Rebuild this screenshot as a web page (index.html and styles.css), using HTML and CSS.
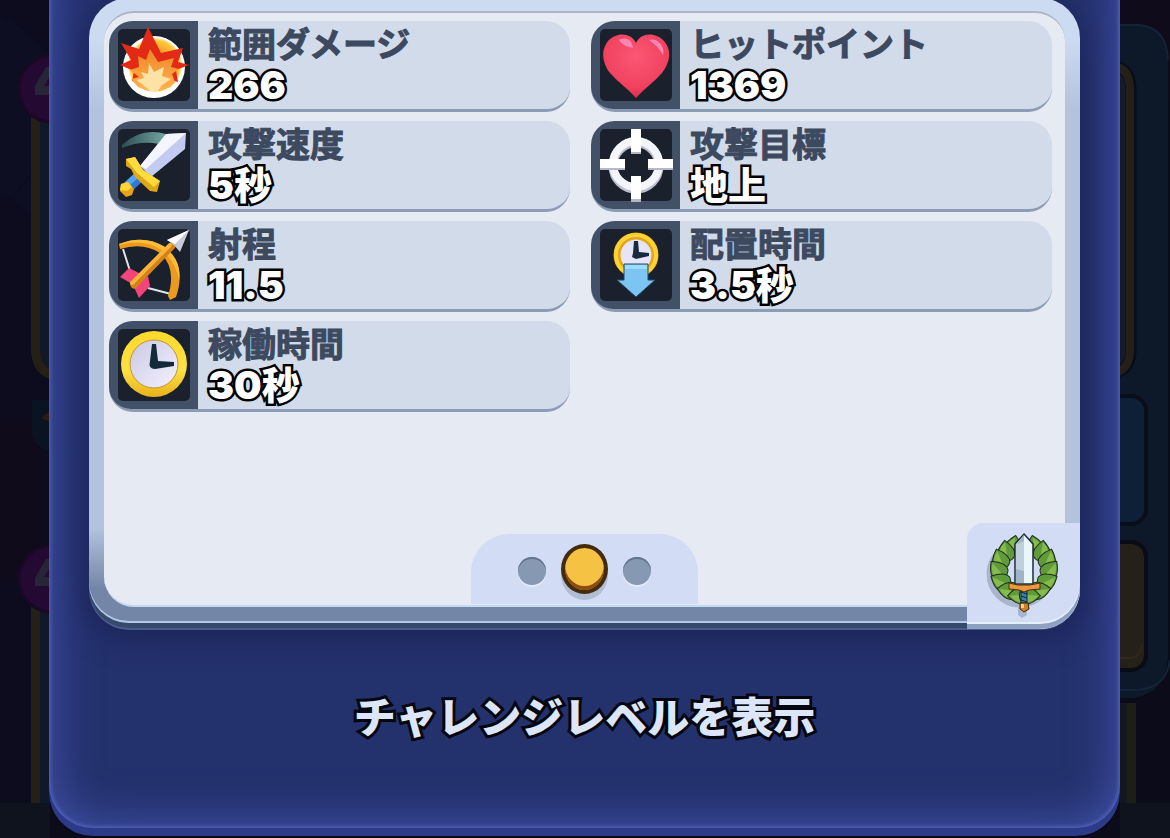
FILE: index.html
```html
<!doctype html>
<html lang="ja">
  <head>
    <meta charset="UTF-8">
    <meta name="viewport" content="width=device-width, initial-scale=1">
    <title>カード情報</title>
    <link rel="stylesheet" href="styles.css">
  </head>
  <body>
    <!-- dimmed screen behind the dialog -->
    <svg class="backdrop backdrop-left" width="50" height="838" viewBox="0 0 50 838" aria-hidden="true">
      <rect width="50" height="838" fill="#0c0c1e"/>
      <path d="M0 16L14 22L50 54V150L30 174L12 196H0zM30 178L50 200V230L12 200z" fill="#0e0e22"/>
      <path d="M0 420H34L40 440V540L20 580H0z" fill="#0f0b1b"/>
      <path d="M36 110H50V376Q36 372 36 358zM36 600H50V803H36z" fill="#111827"/>
      <path d="M35.500 110V350Q36 370 52 375M35.500 590V803" fill="none" stroke="#242015" stroke-width="9"/>
      <path d="M32 400V435Q36 448 50 452V400z" fill="#0a1322"/>
      <path d="M41 418L50 411V422z" fill="#2a1c10"/>
      <circle cx="52" cy="89" r="33" fill="#240a33" stroke="#1b0826" stroke-width="3"/>
      <circle cx="52" cy="579" r="33" fill="#240a33" stroke="#1b0826" stroke-width="3"/>
      <path d="M50 67H46L35 86V95H50V86H44L50 76zM50 559H46L35 578V586H50V577H44L50 567z" fill="#272638"/>
      <rect y="803" width="50" height="35" fill="#0e131d"/>
    </svg>
    <svg class="backdrop backdrop-right" width="50" height="838" viewBox="0 0 50 838" aria-hidden="true">
      <rect width="50" height="838" fill="#0b0b1a"/>
      <rect width="50" height="100" fill="#100b1b"/>
      <path d="M0 24H18Q48 26 48 60V655Q46 693 14 698H0z" fill="#0d1829"/>
      <path d="M0 25H18Q47 27 48 60M50 660Q46 690 14 690H0" fill="none" stroke="#142335" stroke-width="2"/>
      <path d="M-8 66Q11 67 11 90V350Q11 370-8 374" fill="#151b27" stroke="#090d17" stroke-width="11"/>
      <path d="M-8 66Q10 67 10 90V350Q10 370-8 374" fill="none" stroke="#242018" stroke-width="8"/>
      <rect x="-20" y="396" width="46" height="128" rx="15" fill="#0d2037" stroke="#090e19" stroke-width="4"/>
      <rect x="-20" y="542" width="46" height="128" rx="15" fill="#252118" stroke="#090c16" stroke-width="4"/>
      <path d="M-10 658H10Q20 658 22 645" fill="none" stroke="#30261a" stroke-width="2"/>
      <path d="M0 703H16V803H0z" fill="#15171e"/>
      <path d="M7 703H16V803H7z" fill="#1d1e16"/>
      <rect y="803" width="50" height="35" fill="#0e131d"/>
    </svg>

    <main class="dialog">
      <section class="panel">
        <div class="sheet">
          <ul class="stats">
            <li class="stat">
              <div class="tile">
                <svg width="80" height="80" viewBox="0 0 80 80" aria-hidden="true">
                  <defs>
                    <radialGradient id="glow"><stop offset=".5" stop-color="#f39a1c"/><stop offset=".9" stop-color="#ffc63d"/><stop offset="1" stop-color="#ffe9a0"/></radialGradient>
                    <linearGradient id="flame" x2="0" y2="1"><stop stop-color="#ef8527"/><stop offset="1" stop-color="#ffb34f"/></linearGradient>
                  </defs>
                  <rect x="4" y="4" width="72" height="72" rx="5" fill="#1a212d"/>
                  <circle cx="40" cy="42" r="31" fill="#fff"/>
                  <circle cx="41" cy="40" r="27" fill="url(#glow)"/>
                  <path d="M7 18L25 24L34 2L47 28L69 23L64 37L75 40L62 45L64 57L53 54L42 65L31 62L18 56L20 46L6 40L17 35z" fill="#e32a16"/>
                  <path d="M24 31L32 35L36 24L44 37L60 33L57 42L65 44L58 49L61 57L56 62L47 66H34L24 62L17 54L25 52L16 45L25 42z" fill="url(#flame)"/>
                  <path d="M35 38L40 47L50 42L48 51L57 54L48 60L44 66H36L29 60L22 55L30 53L27 47L34 49z" fill="#fce3a5"/>
                </svg>
              </div>
              <div class="stat-text">
                <p class="label">範囲ダメージ</p>
                <p class="value">266</p>
              </div>
            </li>
            <li class="stat">
              <div class="tile">
                <svg width="80" height="80" viewBox="0 0 80 80" aria-hidden="true">
                  <defs>
                    <radialGradient id="heart" cx=".5" cy=".35" r=".7"><stop stop-color="#fb5674"/><stop offset=".7" stop-color="#f0425f"/><stop offset="1" stop-color="#d0274b"/></radialGradient>
                  </defs>
                  <rect x="4" y="4" width="72" height="72" rx="5" fill="#1a212d"/>
                  <path d="M40 18C35 7 20 7 12 16C4 26 7 39 14 48C22 57 32 64 40 73C48 64 58 57 66 48C73 39 77 26 68 16C60 7 45 7 40 18z" fill="url(#heart)"/>
                  <path d="M23 15C31 11 36 16 37 23C33 22 27 21 23 15zM53 15C60 12 70 21 67 30C64 24 59 19 53 15z" fill="#fa86b5"/>
                </svg>
              </div>
              <div class="stat-text">
                <p class="label">ヒットポイント</p>
                <p class="value">1369</p>
              </div>
            </li>
            <li class="stat">
              <div class="tile">
                <svg width="80" height="80" viewBox="0 0 80 80" aria-hidden="true">
                  <defs>
                    <linearGradient id="swing"><stop stop-color="#2c4e53"/><stop offset="1" stop-color="#74a6a3"/></linearGradient>
                  </defs>
                  <rect x="4" y="4" width="72" height="72" rx="5" fill="#1a212d"/>
                  <path d="M8 20Q27 2 52 9L45 19Q27 15 8 23z" fill="url(#swing)"/>
                  <path d="M72 8L52 9L26 41L37 52L71 24z" fill="#c3cbf3"/>
                  <path d="M72 8L52 9L26 41L32 44z" fill="#f3f5ff"/>
                  <path d="M21 48L29 56L18 66L10 58z" fill="#2d78d8"/>
                  <path d="M21 48L25 52L14 62L10 58z" fill="#54a4f3"/>
                  <path d="M12 34L21 32L29 45L46 56L43 67L36 66L21 52L17 44L12 41z" fill="#e0a717"/>
                  <path d="M12 34L21 32L29 45L46 56L40 62L23 48z" fill="#ffdc3d"/>
                  <path d="M7 59L14 57L20 64L18 70L12 72L6 66z" fill="#e6a517"/>
                  <path d="M7 59L14 57L18 62L13 66L6 65z" fill="#fcd535"/>
                </svg>
              </div>
              <div class="stat-text">
                <p class="label">攻撃速度</p>
                <p class="value">5<span class="unit">秒</span></p>
              </div>
            </li>
            <li class="stat">
              <div class="tile">
                <svg width="80" height="80" viewBox="0 0 80 80" aria-hidden="true">
                  <rect x="4" y="4" width="72" height="72" rx="5" fill="#1a212d"/>
                  <circle cx="40" cy="41" r="23" fill="none" stroke="#b9bdcd" stroke-width="9"/>
                  <circle cx="40" cy="39" r="23" fill="none" stroke="#f4f5fb" stroke-width="8"/>
                  <path d="M35 24H45V29H35zM35 71H45V77H35zM4 39H29V45H4zM52 39H77V45H52z" fill="#b4b7c7"/>
                  <path d="M35 4H45V27H35zM35 51H45V74H35zM4 34H29V43H4zM52 34H77V43H52z" fill="#fff"/>
                </svg>
              </div>
              <div class="stat-text">
                <p class="label">攻撃目標</p>
                <p class="value"><span class="unit">地上</span></p>
              </div>
            </li>
            <li class="stat">
              <div class="tile">
                <svg width="80" height="80" viewBox="0 0 80 80" aria-hidden="true">
                  <rect x="4" y="4" width="72" height="72" rx="5" fill="#1a212d"/>
                  <path d="M9 24L16 46M34 63L57 69" fill="none" stroke="#dfe3e8" stroke-width="2"/>
                  <path d="M5 19Q30 9 51 22Q73 40 62 72L56 75L54 71Q63 43 46 28Q29 17 6 24z" fill="#ec9a1f"/>
                  <path d="M5 19Q30 9 51 22Q68 36 65 55Q62 38 49 26Q30 13 6 20z" fill="#fdbb3a"/>
                  <path d="M6 52L15 43L27 49L20 60zM34 51L36 61L25 73L19 60z" fill="#f2457a"/>
                  <path d="M20 60L58 21" stroke="#d4811a" stroke-width="7" stroke-linecap="round"/>
                  <path d="M18 58L56 20" stroke="#fdb338" stroke-width="4" stroke-linecap="round"/>
                  <path d="M75 5L53 15L60 20L66 27z" fill="#c7cad9"/>
                  <path d="M75 5L53 15L61 19z" fill="#fff"/>
                </svg>
              </div>
              <div class="stat-text">
                <p class="label">射程</p>
                <p class="value">11.5</p>
              </div>
            </li>
            <li class="stat">
              <div class="tile">
                <svg width="80" height="80" viewBox="0 0 80 80" aria-hidden="true">
                  <rect x="4" y="4" width="72" height="72" rx="5" fill="#1a212d"/>
                  <circle cx="40" cy="30" r="19" fill="#e6e5f7" stroke="#e3a51b" stroke-width="7"/>
                  <circle cx="40" cy="30" r="20" fill="none" stroke="#fbd433" stroke-width="4"/>
                  <path d="M38 16H42L43 27L53 28V31L40 34L36 32L37 28z" fill="#182a3d"/>
                  <path d="M28 39H52V55H59L40 72L21 55H28z" fill="#7cc5f2" stroke="#234967"/>
                  <path d="M29 40H51V44H29z" fill="#9ddcfb"/>
                </svg>
              </div>
              <div class="stat-text">
                <p class="label">配置時間</p>
                <p class="value">3.5<span class="unit">秒</span></p>
              </div>
            </li>
            <li class="stat">
              <div class="tile">
                <svg width="80" height="80" viewBox="0 0 80 80" aria-hidden="true">
                  <defs>
                    <linearGradient id="rim" x2="0" y2="1"><stop stop-color="#ffd92c"/><stop offset=".6" stop-color="#fde045"/><stop offset="1" stop-color="#eab019"/></linearGradient>
                    <linearGradient id="face" x2="1" y2="1"><stop stop-color="#c9c8e2"/><stop offset="1" stop-color="#f5f2ff"/></linearGradient>
                  </defs>
                  <rect x="4" y="4" width="72" height="72" rx="5" fill="#1a212d"/>
                  <circle cx="40" cy="39" r="33" fill="url(#rim)"/>
                  <circle cx="40" cy="39" r="24" fill="url(#face)" stroke="#c29535"/>
                  <path d="M38 19H42L44 36L60 37V41L41 44Q34 44 36 36z" fill="#122a3c"/>
                </svg>
              </div>
              <div class="stat-text">
                <p class="label">稼働時間</p>
                <p class="value">30<span class="unit">秒</span></p>
              </div>
            </li>
          </ul>
          <nav class="pager" aria-label="ページ">
            <button class="dot" type="button" aria-label="1"></button>
            <button class="dot dot-active" type="button" aria-label="2" aria-current="page"></button>
            <button class="dot" type="button" aria-label="3"></button>
          </nav>
        </div>
        <button class="badge" type="button" aria-label="チャレンジ">
          <svg width="80" height="88" viewBox="0 0 80 88" aria-hidden="true">
            <defs>
              <g id="leaf">
                <path d="M0-11Q11-1 8 6Q5 10 0 10Q-5 10-8 6Q-11-1 0-11z" fill="#5f9a3b" stroke="#202f1b"/>
                <path d="M0-9Q-9-1-6 6L1 8z" fill="#86bc4e"/>
              </g>
              <g id="branch">
                <use href="#leaf" transform="rotate(-24) translate(0 -26) rotate(36)"/>
                <use href="#leaf" transform="rotate(-44) translate(0 -26) rotate(38)"/>
                <use href="#leaf" transform="rotate(-66) translate(0 -26) rotate(46)"/>
                <use href="#leaf" transform="rotate(-90) translate(0 -26) rotate(52)"/>
                <use href="#leaf" transform="rotate(-116) translate(0 -26) rotate(54)"/>
                <use href="#leaf" transform="rotate(-142) translate(0 -26) rotate(62)"/>
                <use href="#leaf" transform="rotate(-168) translate(0 -26) rotate(76)"/>
              </g>
            </defs>
            <circle cx="36" cy="42" r="28" fill="none" stroke="#a9b5cf" stroke-width="11"/>
            <path d="M34 66H43V83L38 86L34 83z" fill="#a9b5cf"/>
            <use href="#branch" transform="translate(40 38)"/>
            <use href="#branch" transform="translate(40 38) scale(-1 1)"/>
            <path d="M40 2L49 12V52H31V12z" fill="#e9f6fb" stroke="#1e2b38" stroke-width="1.500"/>
            <path d="M40 3V51H32V13z" fill="#9fb4c6"/>
            <path d="M32 13L40 9V39L32 37z" fill="#bfd0dc"/>
            <path d="M37 57H43V71H37z" fill="#3c7fb5" stroke="#17283a"/>
            <path d="M37 60L43 62M37 64L43 66M37 68L43 70" stroke="#17283a"/>
            <path d="M25 51L34 53H46L56 51V57L45 58L40 60L35 58L25 57z" fill="#ea9a3c" stroke="#4d2d12"/>
            <path d="M36 71H44L45 77L40 80L36 77z" fill="#c98128" stroke="#3c240f"/>
            <path d="M37 72H40V76H37z" fill="#fbd27c"/>
          </svg>
        </button>
      </section>
      <footer class="actions">
        <button class="show-level" type="button">チャレンジレベルを表示</button>
      </footer>
    </main>
  </body>
</html>
```
FILE: styles.css
```css
* {
  box-sizing: border-box;
}
body {
  margin: 0;
  min-height: 100vh;
  overflow: hidden;
  background-color: #0b0b1a;
  font-family: Inter, "Noto Sans CJK JP", sans-serif;
}
button {
  padding: 0;
  border: 0;
  background: none;
  font: inherit;
  cursor: pointer;
}
p,
ul {
  margin: 0;
  padding: 0;
}
.backdrop {
  position: absolute;
  top: 0;
}
.backdrop-left {
  left: 0;
}
.backdrop-right {
  right: 0;
}

/* blue dialog, its top edge is above the screen */
.dialog {
  position: relative;
  display: flex;
  flex-direction: column;
  height: calc(100vh + 50px);
  margin: -60px 50px 0 49px;
  padding: 58px 40px 0;
  border-radius: 0 0 44px 44px;
  background-color: #23316d;
  box-shadow:
    inset 0 0 4px 1px #5a6bc8,
    inset 0 0 50px #4757b2,
    0 8px 0 #2d3a88,
    0 10px 0 #080a18;
}

/* bevelled frame */
.panel {
  position: relative;
  flex: 1;
  display: flex;
  padding: 13px 15px 16px;
  border-radius: 40px;
  background: linear-gradient(#cddbf2 40px, #b3c3de 110px, #b3c3de 530px, #7486a8 590px);
  box-shadow:
    inset 0 -2px 0 #b2c8ea,
    0 5px 0 #364a6c,
    0 7px 0 #4a5b8c,
    0 10px 30px 4px rgba(26, 32, 80, 0.8);
}
.sheet {
  flex: 1;
  display: flex;
  flex-direction: column;
  justify-content: space-between;
  padding: 8px 13px 1px 5px;
  border-radius: 30px;
  border-top: 2px solid #abb5c6;
  border-bottom: 2px solid #c6d9f2;
  background-color: #e6ebf3;
}
.stats {
  display: grid;
  grid-template-columns: 1fr 1fr;
  gap: 9px 21px;
  list-style: none;
}
.stat {
  display: flex;
  height: 91px;
  border-radius: 24px;
  border-bottom: 3px solid #8d9cb6;
  background-color: #d1dbe9;
}
.tile {
  display: flex;
  justify-content: center;
  align-items: center;
  width: 89px;
  border-radius: 24px 0 0 22px;
  background-color: #425068;
}
.stat-text {
  padding: 2px 10px;
}
.label {
  color: #3d495f;
  font-family: "Noto Sans CJK JP", sans-serif;
  font-size: 34px;
  font-weight: 700;
  line-height: 40px;
  -webkit-text-stroke: 1px #3d495f;
}
.value {
  color: #fff;
  font-size: 39px;
  font-weight: 900;
  line-height: 44px;
  -webkit-text-stroke: 5px #000;
  paint-order: stroke fill;
  text-shadow: 0 2px 0 #000;
}
.unit {
  font-size: 38px;
}

.pager {
  align-self: center;
  display: flex;
  justify-content: center;
  align-items: center;
  gap: 15px;
  width: 227px;
  height: 70px;
  margin-left: 8px;
  border-radius: 38px 38px 0 0;
  background-color: #d2ddf5;
}
.dot {
  width: 28px;
  height: 28px;
  margin-top: 4px;
  border-radius: 50%;
  background-color: #8798b3;
  box-shadow: inset 0 2px 0 #64748f, 0 2px 0 #e3ebfa;
}
.dot-active {
  width: 47px;
  height: 50px;
  margin-top: 0;
  border: 4px solid #432b0e;
  background-color: #f6c243;
  box-shadow: inset 0 -4px 0 #8d4d12, 0 6px 0 #b1bdd2;
}

/* laurel badge over the lower right corner of the frame */
.badge {
  position: absolute;
  right: 0;
  bottom: -6px;
  width: 113px;
  height: 106px;
  padding: 9px 16px;
  border-radius: 16px 0 40px 0;
  background-color: #d2ddf5;
  box-shadow: inset 0 -5px 0 #8fa1c3, inset 0 -7px 0 #e6effc;
}

.actions {
  display: flex;
  justify-content: center;
  align-items: center;
  height: 205px;
  padding-bottom: 22px;
}
.show-level {
  color: #dce6f8;
  font-family: "Noto Sans CJK JP", sans-serif;
  font-size: 42px;
  font-weight: 900;
  line-height: 60px;
  -webkit-text-stroke: 6px #05060f;
  paint-order: stroke fill;
  text-shadow: 0 3px 0 #05060f;
}
```
